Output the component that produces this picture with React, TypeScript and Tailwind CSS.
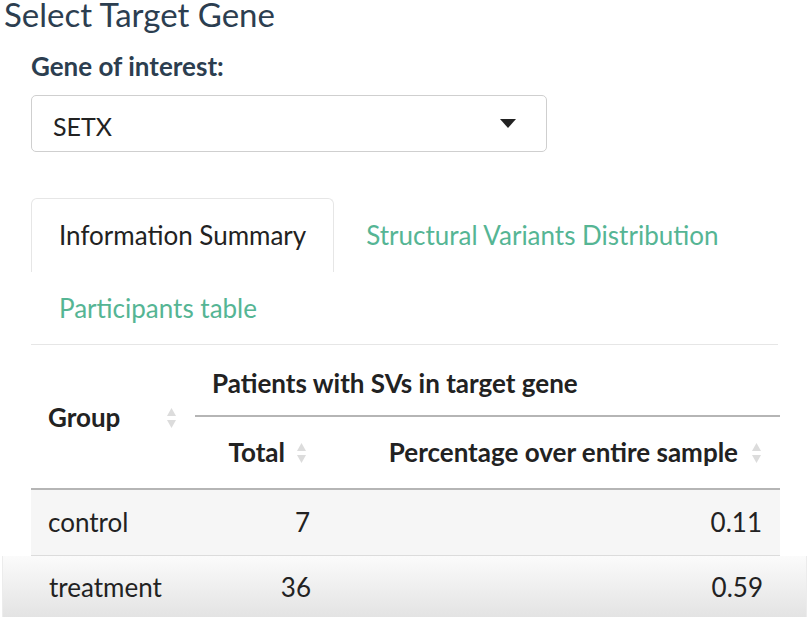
import React from 'react'

function SortIcon() {
  return (
    <svg width="11" height="24" viewBox="0 0 11 24" className="shrink-0">
      <path d="M5.5 2 L10 10 L1 10 Z" fill="#dcdcdc" />
      <path d="M1 14 L10 14 L5.5 22 Z" fill="#dcdcdc" />
    </svg>
  )
}

const rows = [
  { group: 'control', total: 7, pct: '0.11' },
  { group: 'treatment', total: 36, pct: '0.59' },
]

export default function App() {
  return (
    <div
      className="w-[809px] h-[617px] overflow-hidden bg-white text-[#2c3e50]"
      style={{ fontFamily: 'Lato, "Noto Sans", sans-serif' }}
    >
      <h3 className="text-[33px] leading-[28px] pl-[4px]">Select Target Gene</h3>

      <div className="px-[31px]">
        {/* Gene selector */}
        <label className="block mt-[25px] text-[26px] leading-none font-bold">Gene of interest:</label>
        <div className="mt-[16px] w-[516px] h-[57px] border border-[#cfcfcf] rounded-[5px] flex items-center justify-between pl-[21px] pr-[30px]">
          <span className="text-[25px] leading-none text-[#222] pt-[5px]">SETX</span>
          <svg width="16" height="9" viewBox="0 0 16 9">
            <path d="M0 0 H16 L8 9 Z" fill="#222" />
          </svg>
        </div>

        {/* Tabs */}
        <div className="mt-[46px] flex flex-wrap border-b border-[#e6e6e6] text-[26px]">
          <div className="h-[74px] px-[27px] flex items-center border border-b-0 border-[#e6e6e6] rounded-t-[6px] text-[#222] bg-white mr-[2px]">
            Information Summary
          </div>
          <div className="h-[74px] px-[30px] flex items-center text-[#55b594]">Structural Variants Distribution</div>
          <div className="h-[72px] px-[28px] flex items-center text-[#55b594]">Participants table</div>
        </div>

        {/* Table header */}
        <div className="grid grid-cols-[164px_130px_455px] text-[26px] text-[#222]">
          <div className="row-span-2 flex items-center justify-between pl-[17px] pr-[18px] pt-[2px] font-bold border-b-2 border-[#b5b5b5]">
            <span>Group</span>
            <SortIcon />
          </div>
          <div className="col-span-2 h-[72px] flex items-center pl-[17px] pt-[6px] font-bold border-b-2 border-[#b5b5b5]">
            Patients with SVs in target gene
          </div>
          <div className="h-[73px] flex items-center justify-end gap-[11px] pr-[18px] font-bold border-b-2 border-[#b5b5b5]">
            <span>Total</span>
            <SortIcon />
          </div>
          <div className="h-[73px] flex items-center justify-end gap-[13px] pr-[18px] font-bold border-b-2 border-[#b5b5b5]">
            <span>Percentage over entire sample</span>
            <SortIcon />
          </div>

          {/* first body row (striped) */}
          <div className="h-[66px] flex items-center pl-[17px] bg-[#f6f6f6] border-b border-[#dcdcdc]">{rows[0].group}</div>
          <div className="h-[66px] flex items-center justify-end pr-[15px] bg-[#f6f6f6] border-b border-[#dcdcdc]">{rows[0].total}</div>
          <div className="h-[66px] flex items-center justify-end pr-[18px] bg-[#f6f6f6] border-b border-[#dcdcdc]">{rows[0].pct}</div>
        </div>

        {/* last row sits in a raised band */}
        <div className="-mx-[29px] px-[29px] border-x border-[#ececec] bg-linear-to-b from-[#fbfbfb] to-[#e3e3e3]">
          <div className="grid grid-cols-[164px_130px_455px] text-[26px] text-[#222]">
            <div className="h-[62px] flex items-center pl-[17px]">{rows[1].group}</div>
            <div className="h-[62px] flex items-center justify-end pr-[15px]">{rows[1].total}</div>
            <div className="h-[62px] flex items-center justify-end pr-[18px]">{rows[1].pct}</div>
          </div>
        </div>
      </div>
    </div>
  )
}
